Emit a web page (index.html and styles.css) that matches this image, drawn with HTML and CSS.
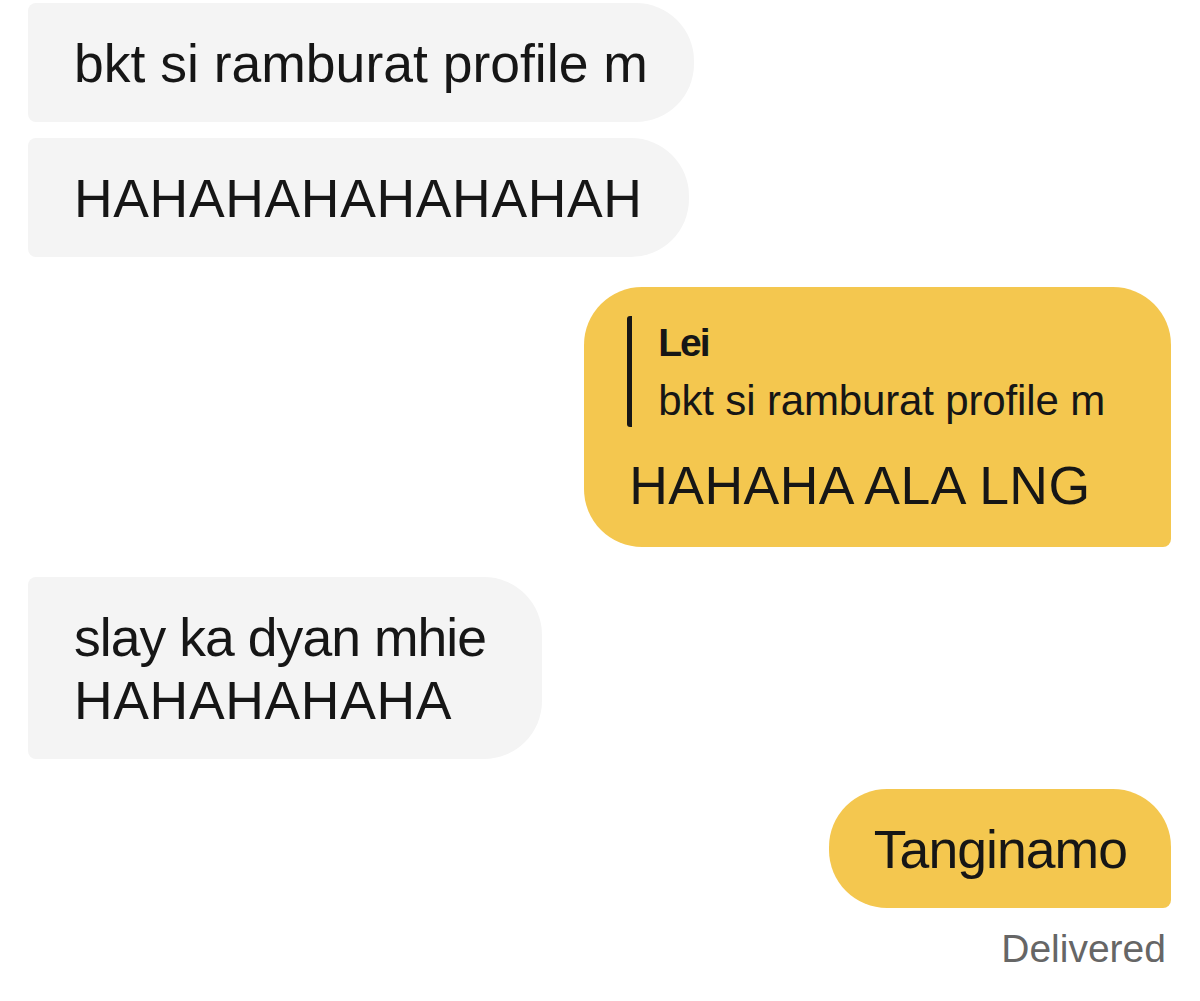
FILE: index.html
```html
<!DOCTYPE html>
<html>
<head>
<meta charset="utf-8">
<link rel="stylesheet" href="styles.css">
</head>
<body>
<div class="chat">
  <div class="msg in">bkt si ramburat profile m</div>
  <div class="msg in caps">HAHAHAHAHAHAHAH</div>
  <div class="msg out reply">
    <div class="quote">
      <div class="quote-name">Lei</div>
      <div class="quote-text">bkt si ramburat profile m</div>
    </div>
    <div class="reply-text">HAHAHA ALA LNG</div>
  </div>
  <div class="msg in multi"><span class="tight">slay ka dyan mhie</span><br><span class="caps">HAHAHAHAHA</span></div>
  <div class="msg out tight">Tanginamo</div>
  <div class="status">Delivered</div>
</div>
</body>
</html>
```
FILE: styles.css
```css
html, body {
  margin: 0;
  padding: 0;
  background: #ffffff;
}
body {
  width: 1200px;
  height: 1001px;
  overflow: hidden;
  font-family: "Liberation Sans", Arial, sans-serif;
  color: #161616;
}
.chat {
  display: flex;
  flex-direction: column;
  align-items: flex-start;
  padding: 3px 29px 0 28px;
}
.msg {
  font-size: 53.5px;
  line-height: 63px;
  padding: 29px 46px 27px 46px;
  white-space: nowrap;
}
.caps {
  letter-spacing: 0.65px;
}
.tight {
  letter-spacing: -0.95px;
}
.msg.in {
  background: #f4f4f4;
  border-radius: 8px 58px 58px 8px;
}
.msg.out {
  background: #f4c74f;
  border-radius: 58px 58px 8px 58px;
  align-self: flex-end;
  padding-left: 45px;
  padding-right: 44px;
}
.msg.in + .msg.in {
  margin-top: 16px;
}
.msg.in + .msg.out,
.msg.out + .msg.in {
  margin-top: 30px;
}
.msg.multi {
  margin-top: 30px;
  padding-right: 56px;
}
.msg.reply {
  padding: 29px 66px 30px 43px;
}
.quote {
  border-left: 5.5px solid #161616;
  border-radius: 3px;
  padding-left: 26px;
  padding-top: 2px;
}
.quote-name {
  font-size: 39px;
  font-weight: bold;
  line-height: 50px;
  letter-spacing: -2px;
}
.quote-text {
  font-size: 42px;
  line-height: 52px;
  margin-top: 7px;
  letter-spacing: -0.15px;
}
.reply-text {
  margin-top: 27px;
  padding-left: 2px;
  letter-spacing: 0.45px;
}
.status {
  align-self: flex-end;
  font-size: 39px;
  line-height: 48px;
  color: #666666;
  margin-top: 17px;
  margin-right: 5px;
}
```
